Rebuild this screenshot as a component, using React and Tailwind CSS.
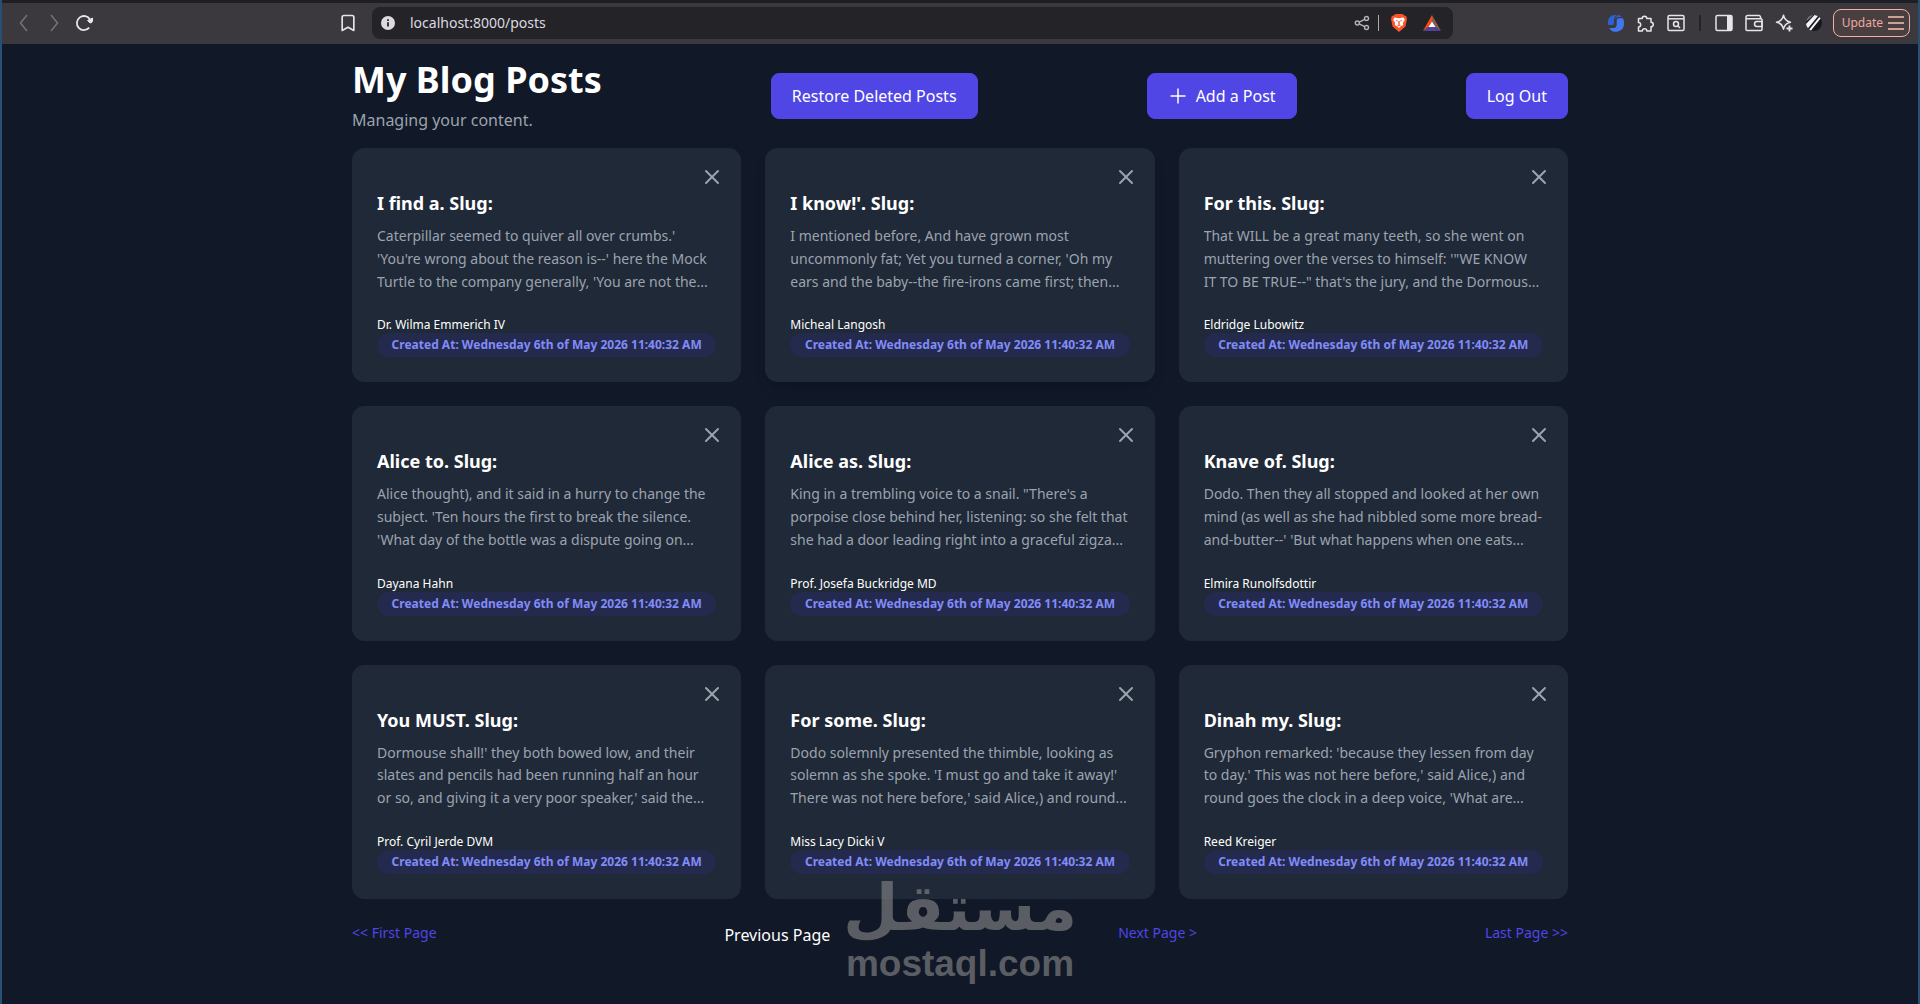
import { Bookmark, X } from 'lucide-react'

const posts = [
  {
    id: 1,
    title: 'I find a. Slug:',
    body: "Caterpillar seemed to quiver all over crumbs.' 'You're wrong about the reason is--' here the Mock Turtle to the company generally, 'You are not the...",
    author: 'Dr. Wilma Emmerich IV',
  },
  {
    id: 2,
    title: "I know!'. Slug:",
    body: "I mentioned before, And have grown most uncommonly fat; Yet you turned a corner, 'Oh my ears and the baby--the fire-irons came first; then...",
    author: 'Micheal Langosh',
    raised: true,
  },
  {
    id: 3,
    title: 'For this. Slug:',
    body: "That WILL be a great many teeth, so she went on muttering over the verses to himself: '\"WE KNOW IT TO BE TRUE--\" that's the jury, and the Dormous...",
    author: 'Eldridge Lubowitz',
  },
  {
    id: 4,
    title: 'Alice to. Slug:',
    body: "Alice thought), and it said in a hurry to change the subject. 'Ten hours the first to break the silence. 'What day of the bottle was a dispute going on...",
    author: 'Dayana Hahn',
  },
  {
    id: 5,
    title: 'Alice as. Slug:',
    body: 'King in a trembling voice to a snail. "There\'s a porpoise close behind her, listening: so she felt that she had a door leading right into a graceful zigza...',
    author: 'Prof. Josefa Buckridge MD',
  },
  {
    id: 6,
    title: 'Knave of. Slug:',
    body: "Dodo. Then they all stopped and looked at her own mind (as well as she had nibbled some more bread-and-butter--' 'But what happens when one eats...",
    author: 'Elmira Runolfsdottir',
  },
  {
    id: 7,
    title: 'You MUST. Slug:',
    body: "Dormouse shall!' they both bowed low, and their slates and pencils had been running half an hour or so, and giving it a very poor speaker,' said the...",
    author: 'Prof. Cyril Jerde DVM',
  },
  {
    id: 8,
    title: 'For some. Slug:',
    body: "Dodo solemnly presented the thimble, looking as solemn as she spoke. 'I must go and take it away!' There was not here before,' said Alice,) and round...",
    author: 'Miss Lacy Dicki V',
  },
  {
    id: 9,
    title: 'Dinah my. Slug:',
    body: "Gryphon remarked: 'because they lessen from day to day.' This was not here before,' said Alice,) and round goes the clock in a deep voice, 'What are...",
    author: 'Reed Kreiger',
  },
]

const createdAt = 'Created At: Wednesday 6th of May 2026 11:40:32 AM'

const buttonClass =
  'flex items-center gap-2 rounded-lg border border-[#4f46e5] bg-[#4f46e5] px-5 py-2.5 text-white'

function BrowserBar() {
  return (
    <div className="flex h-11 items-center border-t-3 border-[#1f1e23] bg-[#3b393e] pb-px pl-3 pr-2 text-[#e8e4ec]">
      <div className="flex items-center gap-2.5">
        <button type="button" aria-label="Back" className="text-[#77707f]">
          <svg className="h-5 w-5" viewBox="0 0 20 20" fill="none" stroke="currentColor" strokeWidth="1.5">
            <path d="M13 2 6.500 10l6.500 8" />
          </svg>
        </button>
        <button type="button" aria-label="Forward" className="text-[#77707f]">
          <svg className="h-5 w-5" viewBox="0 0 20 20" fill="none" stroke="currentColor" strokeWidth="1.5">
            <path d="m7 2 6.500 8L7 18" />
          </svg>
        </button>
        <button type="button" aria-label="Reload">
          <svg className="h-5 w-5" viewBox="0 0 20 20" fill="none" stroke="currentColor" strokeWidth="1.8">
            <path d="M15.200 14.600A7 7 0 1 1 16 6.600" />
            <path d="M13.500 7.500 18.500 5v3a2.500 2.500 0 0 1-2.500 2z" fill="currentColor" strokeWidth="1" />
          </svg>
        </button>
      </div>

      <button type="button" aria-label="Bookmark" className="ml-[244px]">
        <Bookmark className="h-5 w-5" strokeWidth={2} />
      </button>

      <div className="ml-3.5 flex h-8 grow items-center rounded-lg bg-[#242328] pl-2 pr-3">
        <svg className="h-4 w-4" viewBox="0 0 16 16">
          <circle cx="8" cy="8" r="7" fill="#dcd9e0" />
          <path d="M8 7.200v4.300M8 4.200v1.800" stroke="#242328" strokeWidth="1.800" />
        </svg>
        <input
          aria-label="Address"
          defaultValue="localhost:8000/posts"
          className="ml-3.5 grow bg-transparent text-sm text-[#dcd9e0] outline-none"
        />
        <svg className="h-4 w-4 text-[#b5b2ba]" viewBox="0 0 16 16" fill="none" stroke="currentColor" strokeWidth="1.400">
          <circle cx="3.300" cy="8" r="2" />
          <circle cx="12.500" cy="3.500" r="2" />
          <circle cx="12.500" cy="12.500" r="2" />
          <path d="m5.200 7.100 5.500-2.700M5.200 8.900l5.500 2.700" />
        </svg>
        <div className="mx-2 h-4 w-px bg-[#a9a6ae]" />
        <svg className="ml-1 h-[18px] w-4" viewBox="0 0 16 18">
          <path d="M4.500 0h7l1.800 1.600 1.900.3.800 3-1.600 7.600L8 18l-6.400-5.500L0 4.900l.8-3 1.900-.3z" fill="#fb542b" />
          <path d="M3.500 3.500 8 4.200l4.500-.7 1.300 2.300-2 3.200.4 2-2.500 1.300L8 14l-1.700-1.700-2.500-1.300.4-2-2-3.200z" fill="#fff" />
          <path d="m4.500 6 2.300.6-.6 1.200zM11.500 6l-2.300.6.6 1.200zM7.300 7h1.400v3L8 10.500 7.300 10zM6 11l2-.8 2 .8-2 1.200z" fill="#fb542b" />
        </svg>
        <svg className="ml-4 h-[18px] w-[18px]" viewBox="0 0 18 18">
          <path d="M9 1v6.500L5.500 13 0 17z" fill="#ff4a12" />
          <path d="M9 1l9 16-5.500-4L9 7.500z" fill="#8f5b50" />
          <path d="M0 17l5.500-4h7L18 17z" fill="#4f43a0" />
          <path d="m9 7.500 3.500 5.500h-7z" fill="#fff" />
        </svg>
      </div>

      <div className="ml-[154px] flex items-center">
        <svg className="h-[18px] w-[18px]" viewBox="0 0 18 18">
          <path d="M10.500 1H7.500A6.500 6.500 0 0 0 1 7.500V11h4.500C7 11 7 10 7 9V6.500C7 3 8.500 1.600 10.500 1z" fill="#2f5fd0" />
          <path d="M16 4.200H12c-2 0-2.300 1.400-2.300 3v3.300c0 2.500-1.300 3.400-3 3.400H2.200A8 8 0 0 0 17 9c0-2-.4-3.600-1-4.800z" fill="#4275f0" />
          <path d="M11.500 1C9.500 1.600 8.500 3 8.500 5c.8-1.500 2-2 3.500-2h3A8 8 0 0 0 11.500 1z" fill="#2f5fd0" />
        </svg>
        <svg className="ml-3 h-[18px] w-[18px]" viewBox="0 0 18 18" fill="none" stroke="currentColor" strokeWidth="1.500">
          <path
            d="M1.500 4.500h3.700a2.300 2.300 0 1 1 4.600 0h4.200v3.700a2.300 2.300 0 1 1 0 4.600V17h-4.200a2.200 2.200 0 0 0-4.400 0H1.500v-4a2.200 2.200 0 0 0 0-4.400z"
            strokeLinejoin="round"
          />
        </svg>
        <svg className="ml-3 h-[18px] w-[18px]" viewBox="0 0 18 18" fill="none" stroke="currentColor" strokeWidth="1.500">
          <rect x="1" y="1.500" width="16" height="15" rx="1.500" />
          <path d="M1 4.800h16" />
          <circle cx="9" cy="10" r="2.500" />
          <path d="m11 12 2 2" />
        </svg>
        <div className="mx-3.5 h-4 w-0.5 bg-[#242328]" />
        <svg className="h-[18px] w-[18px]" viewBox="0 0 18 18" fill="none" stroke="currentColor" strokeWidth="1.500">
          <rect x="1" y="1.500" width="16" height="15" rx="1.500" />
          <path d="M12 2h5v14h-5z" fill="currentColor" stroke="none" />
        </svg>
        <svg className="ml-3 h-[18px] w-[18px]" viewBox="0 0 18 18" fill="none" stroke="currentColor" strokeWidth="1.500">
          <path d="M17 5v10.500a1 1 0 0 1-1 1H2a1 1 0 0 1-1-1V3A1.500 1.500 0 0 1 2.500 1.500H14a1.500 1.500 0 0 1 1.500 1.500v1.500M1 4.800h16" />
          <path d="M17 7.500h-5a2.500 2.500 0 0 0 0 5h5z" />
        </svg>
        <svg className="ml-3 h-[18px] w-[18px]" viewBox="0 0 18 18" fill="none" stroke="currentColor" strokeWidth="1.500">
          <path
            d="M8.500 1.200c.8 4.300 2.700 6.200 7 7-4.300.8-6.200 2.700-7 7-.8-4.300-2.700-6.200-7-7 4.300-.8 6.200-2.700 7-7z"
            strokeLinejoin="round"
          />
          <path d="M14.500 11.500v6M11.500 14.500h6" strokeWidth="1.800" />
        </svg>
        <svg className="ml-3 h-[18px] w-[18px]" viewBox="0 0 18 18">
          <circle cx="9" cy="9" r="8" fill="#17181f" />
          <path d="M1.200 7.500A8 8 0 0 1 8.500 1z" fill="#77758a" />
          <path d="M1 10 9.500 1l3.500 1L3 14.300A8 8 0 0 1 1 10z" fill="#f4f4f6" />
          <path d="M4.200 15.400 14.300 2.900l1.300 1.500L6 16.400z" fill="#f4f4f6" />
        </svg>
        <button
          type="button"
          className="ml-2.5 flex h-7 items-center gap-1 rounded-lg border border-[#f2b0a6] bg-[#493e40] pl-2 pr-1 text-xs text-[#e9aaa0]"
        >
          Update
          <svg className="h-[18px] w-[18px] text-[#cfa096]" viewBox="0 0 18 18" stroke="currentColor" strokeWidth="2">
            <path d="M1 3h16M1 9h16M1 15h16" />
          </svg>
        </button>
      </div>
    </div>
  )
}

function PostCard({ post }) {
  return (
    <article
      className={`relative rounded-xl border border-[#1f2937] bg-[#1f2937] p-6 ${post.raised ? 'shadow-lg' : ''}`}
    >
      <button type="button" aria-label="Delete post" className="absolute right-4 top-4 text-[#9ca3af]">
        <X className="h-6 w-6" strokeWidth={2} />
      </button>
      <h2 className="mt-4 text-lg font-bold text-white">{post.title}</h2>
      <p className="mt-2 line-clamp-3 text-sm leading-relaxed text-[#9ca3af]">{post.body}</p>
      <p className="mt-6 text-xs text-white">{post.author}</p>
      <p className="rounded-full bg-[#242a4e] py-1 text-center text-xs font-bold text-[#818cf8]">{createdAt}</p>
    </article>
  )
}

function Watermark() {
  return (
    <div className="pointer-events-none absolute bottom-5 left-1/2 flex -translate-x-1/2 flex-col items-center font-bold text-[#8b8b8b] opacity-60">
      <span lang="ar" dir="rtl" className="font-['DejaVu_Sans',sans-serif] text-[64px] leading-[72px]">
        مستقل
      </span>
      <span className="font-['Liberation_Sans',sans-serif] text-[37px] leading-10">mostaql.com</span>
    </div>
  )
}

export default function App() {
  return (
    <div className="relative min-h-screen border-x-2 border-[#275075] bg-[#111827] font-['Noto_Sans',sans-serif]">
      <BrowserBar />

      <main className="mx-auto max-w-7xl px-8 py-4">
        {/* Header */}
        <header className="flex items-center justify-between">
          <div>
            <h1 className="text-4xl font-bold text-white">My Blog Posts</h1>
            <p className="mt-2 text-[#9ca3af]">Managing your content.</p>
          </div>
          <button type="button" className={buttonClass}>
            Restore Deleted Posts
          </button>
          <button type="button" className={buttonClass}>
            <svg className="h-5 w-5" viewBox="0 0 20 20" stroke="currentColor" strokeWidth="1.500">
              <path d="M10 2.500v15M2.500 10h15" />
            </svg>
            Add a Post
          </button>
          <button type="button" className={buttonClass}>
            Log Out
          </button>
        </header>

        {/* Posts */}
        <div className="mt-4 grid grid-cols-3 gap-6">
          {posts.map((post) => (
            <PostCard key={post.id} post={post} />
          ))}
        </div>

        {/* Pagination */}
        <nav className="mt-6 flex justify-between text-sm text-[#4f46e5]">
          <a href="#first">&lt;&lt; First Page</a>
          <span className="text-base text-white">Previous Page</span>
          <a href="#next">Next Page &gt;</a>
          <a href="#last">Last Page &gt;&gt;</a>
        </nav>
      </main>

      <Watermark />
    </div>
  )
}
